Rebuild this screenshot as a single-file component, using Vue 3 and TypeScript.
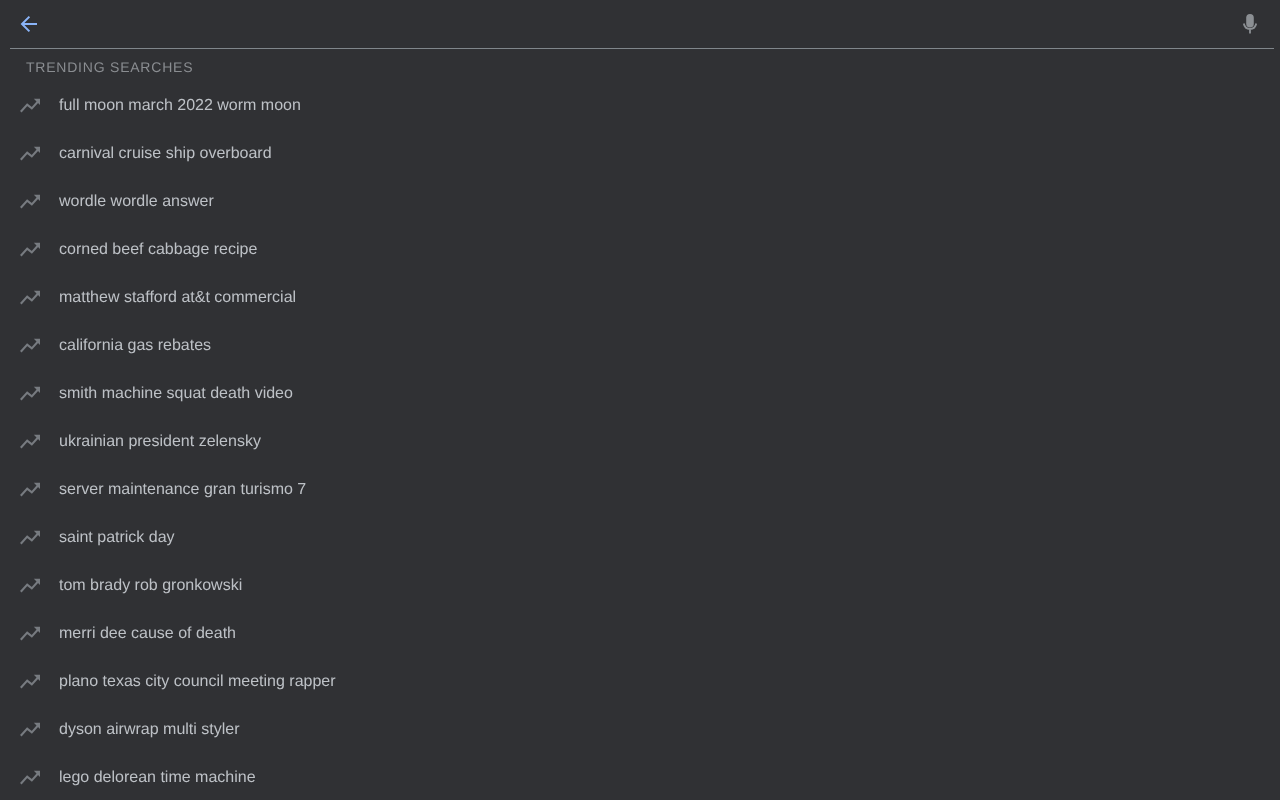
<script setup lang="ts">
const items: string[] = [
  'full moon march 2022 worm moon',
  'carnival cruise ship overboard',
  'wordle wordle answer',
  'corned beef cabbage recipe',
  'matthew stafford at&t commercial',
  'california gas rebates',
  'smith machine squat death video',
  'ukrainian president zelensky',
  'server maintenance gran turismo 7',
  'saint patrick day',
  'tom brady rob gronkowski',
  'merri dee cause of death',
  'plano texas city council meeting rapper',
  'dyson airwrap multi styler',
  'lego delorean time machine',
]
</script>

<template>
  <div class="page">
    <header class="bar">
      <svg class="back" width="24" height="24" viewBox="0 0 24 24"><path fill="none" stroke="#8ab4f8" stroke-width="2" d="M20 12H5.500M12.400 4.600L5 12l7.400 7.400"/></svg>
      <svg class="mic" width="24" height="24" viewBox="0 0 24 24"><rect x="8.200" y="2" width="7.600" height="13.500" rx="3.800" fill="#8b8f93"/><path fill="none" stroke="#8b8f93" stroke-width="1.800" d="M5.800 11.500c.6 3.400 3 5.500 6.200 5.500s5.600-2.100 6.200-5.500M12 17v4.500"/></svg>
    </header>
    <div class="title">TRENDING SEARCHES</div>
    <ul class="list">
      <li v-for="item in items" :key="item" class="row">
        <svg class="trend" width="24" height="24" viewBox="0 0 24 24"><path fill="none" stroke="#777b80" stroke-width="2.100" d="M2.800 18.800L9.200 11.600l4.600 3.800L20 8.500"/><path fill="#777b80" d="M15.800 5.800h6.200v6.200z"/></svg>
        <span class="text">{{ item }}</span>
      </li>
    </ul>
  </div>
</template>

<style>
html, body { margin: 0; background: #303134; overflow: hidden; }
</style>

<style scoped>
.page {
  width: 1280px;
  height: 800px;
  overflow: hidden;
  background: #303134;
  font-family: "Liberation Sans", Arial, sans-serif;
  text-rendering: geometricPrecision;
}
.bar {
  display: flex;
  align-items: center;
  justify-content: space-between;
  height: 48px;
  margin: 0 6px 0 10px;
  padding: 0 12px 0 7px;
  border-bottom: 1px solid #80868b;
}
.title {
  height: 16px;
  margin-top: 10px;
  padding-left: 26px;
  font-size: 14px;
  line-height: 16px;
  letter-spacing: 0.78px;
  color: #8a8d91;
  filter: blur(0.3px);
}
.list {
  list-style: none;
  margin: 6px 0 0;
  padding: 0;
}
.row {
  display: flex;
  align-items: center;
  height: 48px;
  padding-left: 18px;
}
.text {
  margin-left: 17px;
  padding-top: 2px;
  font-size: 16px;
  color: #bdc1c6;
  filter: blur(0.3px);
}
.back, .mic, .trend { display: block; flex: none; filter: blur(0.3px); }
</style>
